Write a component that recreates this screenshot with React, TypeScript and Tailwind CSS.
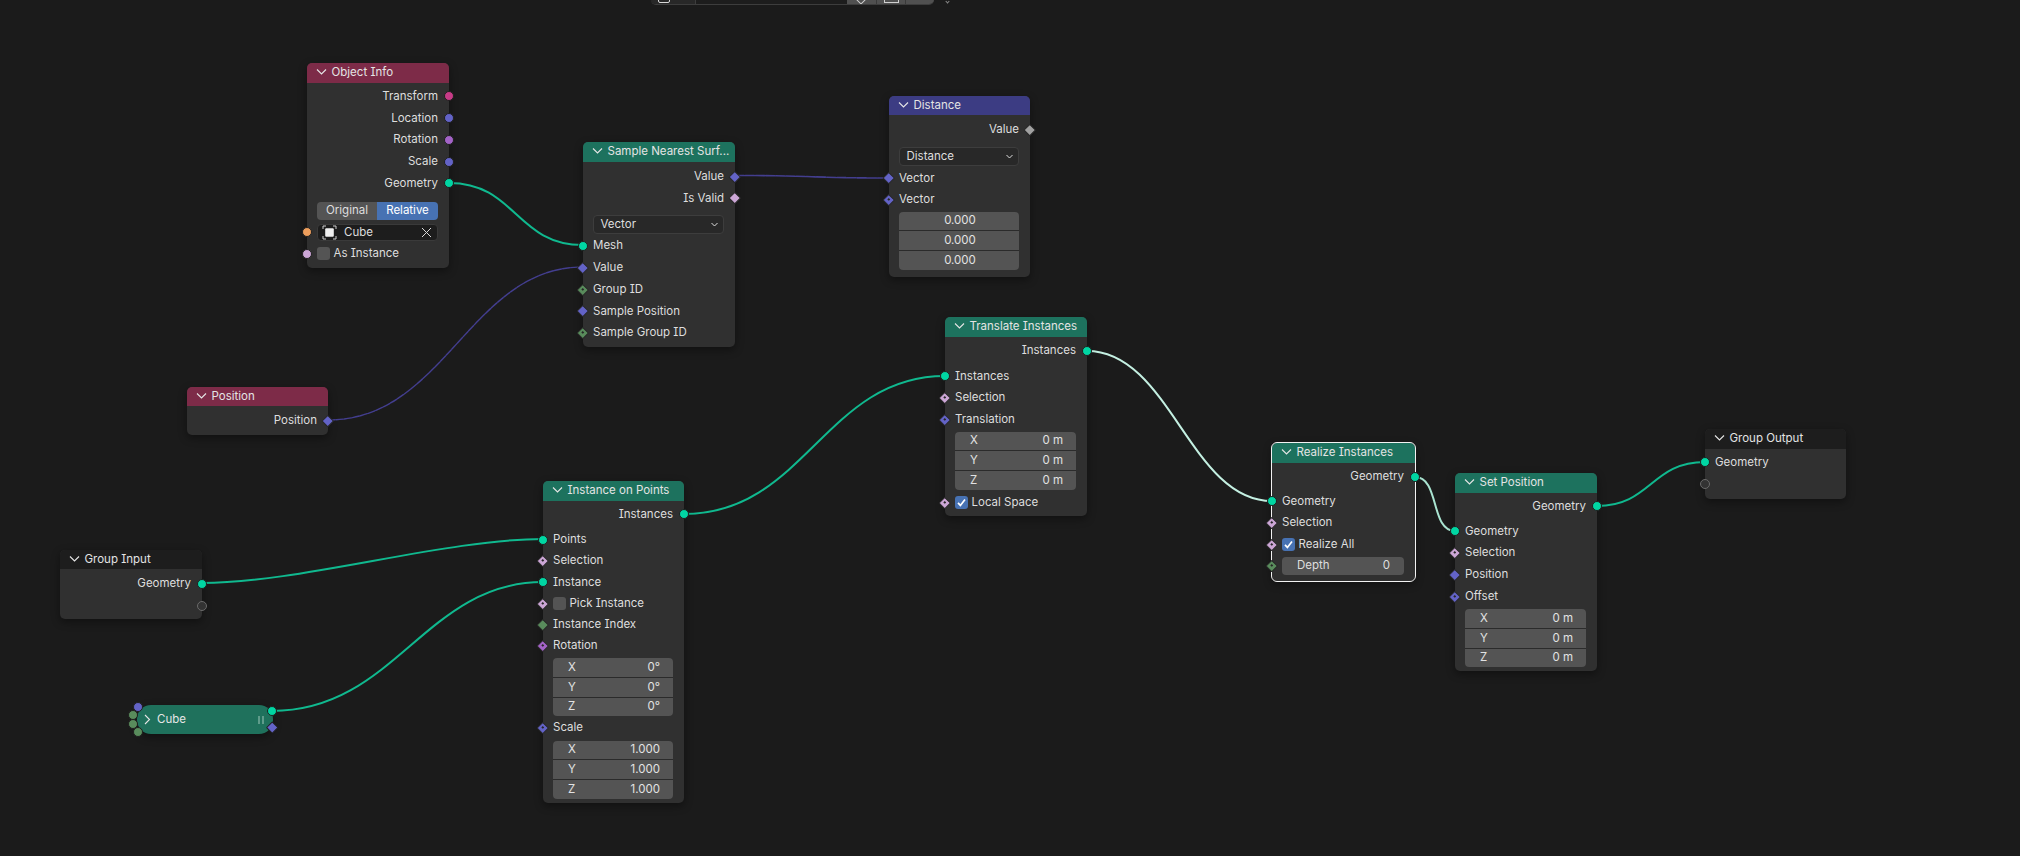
import React from "react";

const GEO = "bg-[#00d6a3]";
const VEC = "bg-[#6363c7]";
const BOOL = "bg-[#cca6d6]";
const INT = "bg-[#598c5c]";
const FLOAT = "bg-[#a1a1a1]";
const ROT = "bg-[#a363c7]";
const MAT = "bg-[#c73b87]";
const OBJ = "bg-[#ed9e5c]";
const EMPTY = "bg-[#333333] !border-[#6a6a6a]";

type SocketProps = { side: "l" | "r"; color: string; shape?: "c" | "d"; dot?: boolean };

function Socket({ side, color, shape = "c", dot }: SocketProps) {
  const pos = side === "l" ? "left-0 -translate-x-1/2" : "right-0 translate-x-1/2";
  if (shape === "c") {
    return (
      <span className={`absolute top-1/2 ${pos} -translate-y-1/2 h-[10px] w-[10px] rounded-full border-[0.5px] border-[#1f1f1f] ${color}`} />
    );
  }
  return (
    <span className={`absolute top-1/2 ${pos} -translate-y-1/2 flex h-[11px] w-[11px] items-center justify-center`}>
      <span className={`flex h-[8.5px] w-[8.5px] shrink-0 rotate-45 items-center justify-center rounded-[1px] border-[0.5px] border-[#262626] ${color}`}>
        {dot ? <span className="h-[2px] w-[2px] bg-[#262626]" /> : null}
      </span>
    </span>
  );
}

function Chevron({ open = true }: { open?: boolean }) {
  return (
    <svg width="11" height="11" viewBox="0 0 11 11" className="shrink-0 text-[#e6e6e6]">
      {open ? (
        <path d="M1 2.5 L5.5 7 L10 2.5" fill="none" stroke="currentColor" strokeWidth="1.1" />
      ) : (
        <path d="M3 1 L7.5 5.5 L3 10" fill="none" stroke="currentColor" strokeWidth="1.1" />
      )}
    </svg>
  );
}

function Node({
  title,
  place,
  head,
  body,
  selected,
  children,
}: {
  title: string;
  place: string;
  head: string;
  body: string;
  selected?: boolean;
  children: React.ReactNode;
}) {
  return (
    <div
      className={`absolute ${place} flex flex-col rounded-[5px] bg-[#303030] shadow-[0_3px_8px_rgba(0,0,0,0.4)] ${
        selected ? "outline outline-[1.5px] outline-[#f2f2f2]" : ""
      }`}
    >
      <div className={`flex h-[19.5px] items-center gap-[4.5px] rounded-t-[5px] pl-[9px] text-[#e4e4e4] ${head}`}>
        <Chevron />
        <span className="whitespace-nowrap">{title}</span>
      </div>
      <div className={`flex flex-col ${body}`}>{children}</div>
    </div>
  );
}

function Out({ label, color, shape }: { label?: string; color: string; shape?: "c" | "d" }) {
  return (
    <div className="relative flex h-[21.75px] items-center justify-end pr-[11px]">
      <span>{label}</span>
      <Socket side="r" color={color} shape={shape} />
    </div>
  );
}

function In({
  label,
  color,
  shape,
  dot,
  h = "h-[21.75px]",
  children,
}: {
  label?: string;
  color: string;
  shape?: "c" | "d";
  dot?: boolean;
  h?: string;
  children?: React.ReactNode;
}) {
  return (
    <div className={`relative flex ${h} items-center pl-[10px]`}>
      {label ? <span>{label}</span> : null}
      {children}
      <Socket side="l" color={color} shape={shape} dot={dot} />
    </div>
  );
}

function Check({ label, checked }: { label: string; checked?: boolean }) {
  return (
    <span className="flex items-center gap-[3.5px]">
      <span className={`flex h-[13px] w-[13px] items-center justify-center rounded-[3px] ${checked ? "bg-[#4772b3]" : "bg-[#545454]"}`}>
        {checked ? (
          <svg width="11" height="11" viewBox="0 0 11 11">
            <path d="M2 5.8 L4.4 8.4 L9 2.4" fill="none" stroke="#ffffff" strokeWidth="1.7" />
          </svg>
        ) : null}
      </span>
      <span>{label}</span>
    </span>
  );
}

function Triple({ rows, center, mt = "mt-0" }: { rows: [string, string][]; center?: boolean; mt?: string }) {
  return (
    <div className={`ml-[10px] mr-[11px] flex flex-col gap-px overflow-hidden rounded-[4px] bg-[#2b2b2b] ${mt}`}>
      {rows.map(([k, v], i) => (
        <div
          key={i}
          className={`flex h-[18.7px] items-center bg-[#545454] pl-[15px] pr-[13px] text-[#e2e2e2] ${center ? "justify-center" : "justify-between"}`}
        >
          {center ? null : <span>{k}</span>}
          <span>{v}</span>
        </div>
      ))}
    </div>
  );
}

function Select({ label, mt }: { label: string; mt: string }) {
  return (
    <div className={`ml-[10px] mr-[11px] flex h-[19px] items-center justify-between rounded-[4px] border border-[#3d3d3d] bg-[#282828] pl-[6.5px] pr-[4px] ${mt}`}>
      <span>{label}</span>
      <svg width="9" height="9" viewBox="0 0 9 9">
        <path d="M1.5 3 L4.5 6 L7.5 3" fill="none" stroke="#dddddd" strokeWidth="1" />
      </svg>
    </div>
  );
}

const XYZ_M: [string, string][] = [
  ["X", "0 m"],
  ["Y", "0 m"],
  ["Z", "0 m"],
];

const LINK_GEO = "#10b98f";
const LINK_SEL = "#c4f0e2";
const LINK_VEC = "#433e8f";
const ROW = "h-[21.2px]";

export default function App() {
  return (
    <div className="relative h-[856px] w-[2020px] overflow-hidden bg-[#1b1b1b] font-['Inter','Liberation_Sans',sans-serif] text-[11.5px] text-[#dedede] [font-feature-settings:'cv08']">
      {/* noodles */}
      <svg width="2020" height="856" className="absolute left-0 top-0">
        <g fill="none" strokeLinecap="round">
          <path d="M449 183 C 516 183, 516 245, 583 245" stroke={LINK_GEO} strokeWidth="2" />
          <path d="M328 420 C 445 420, 470 267, 583 267" stroke={LINK_VEC} strokeWidth="1.4" strokeDasharray="7 1.2" />
          <path d="M735 175.5 C 812 175.5, 812 178, 889 178" stroke={LINK_VEC} strokeWidth="1.6" strokeDasharray="9 1.2" />
          <path d="M202 583 C 300 583, 445 539, 543 539" stroke={LINK_GEO} strokeWidth="2" />
          <path d="M272 711 C 395 711, 425 582, 543 582" stroke={LINK_GEO} strokeWidth="2" />
          <path d="M684 514 C 805 514, 825 376, 945 376" stroke={LINK_GEO} strokeWidth="2" />
          <path d="M1087 351 C 1170 351, 1190 501, 1272 501" stroke={LINK_SEL} strokeWidth="2" />
          <path d="M1415 477 C 1440 477, 1430 531, 1455 531" stroke="#a9e4d1" strokeWidth="2" />
          <path d="M1597 506 C 1651 506, 1651 462, 1705 462" stroke={LINK_GEO} strokeWidth="2" />
        </g>
      </svg>

      {/* top bar */}
      <div className="absolute left-[651px] top-0 flex h-[5px] w-[283px] overflow-hidden rounded-b-[6px] border-b border-[#3d3d3d]">
        <div className="relative w-[44px] bg-[#282828]">
          <span className="absolute -top-[5px] left-[7px] h-[8px] w-[12px] rounded-[2px] border border-[#d8d8d8]" />
        </div>
        <div className="flex-1 border-l border-[#3d3d3d] bg-[#1d1d1d]" />
        <div className="relative w-[29px] bg-[#505050]">
          <span className="absolute -top-[5px] left-[10px] h-[8px] w-[8px] rotate-45 border border-[#cfcfcf]" />
        </div>
        <div className="relative w-[29px] border-l border-[#3a3a3a] bg-[#505050]">
          <span className="absolute -top-[5px] left-[7px] h-[8px] w-[15px] border border-[#cfcfcf]" />
        </div>
        <div className="w-[29px] border-l border-[#3a3a3a] bg-[#505050]" />
      </div>
      <span className="absolute left-[946px] top-0 h-[3px] w-[3px] rotate-45 border-b border-r border-[#8a8a8a]" />

      <Node title="Object Info" place="left-[307px] top-[63px] w-[142px]" head="bg-[#7d2b48]" body="pt-[3px] pb-[3px]">
        <Out label="Transform" color={MAT} />
        <Out label="Location" color={VEC} />
        <Out label="Rotation" color={ROT} />
        <Out label="Scale" color={VEC} />
        <Out label="Geometry" color={GEO} />
        <div className="ml-[10px] mr-[11px] mt-[7.5px] flex h-[18px] overflow-hidden rounded-[4px]">
          <div className="flex w-[60px] items-center justify-center bg-[#545454]">Original</div>
          <div className="flex flex-1 items-center justify-center bg-[#4772b3] text-white">Relative</div>
        </div>
        <div className="relative mt-[4px] h-[17px]">
          <div className="ml-[10px] mr-[11px] flex h-[17px] items-center rounded-[4px] border border-[#3a3a3a] bg-[#1d1d1d] pl-[4px] pr-[5px]">
            <svg width="15" height="15" viewBox="0 0 15 15" className="shrink-0">
              <path d="M4 1 H1 V4 M11 1 H14 V4 M1 11 V14 H4 M14 11 V14 H11" fill="none" stroke="#cfcfcf" strokeWidth="1" />
              <rect x="3.2" y="3.2" width="8.6" height="8.6" rx="1" fill="#f0f0f0" />
            </svg>
            <span className="ml-[7px] flex-1">Cube</span>
            <svg width="11" height="11" viewBox="0 0 11 11" className="shrink-0">
              <path d="M1 1 L10 10 M10 1 L1 10" fill="none" stroke="#d8d8d8" strokeWidth="1" />
            </svg>
          </div>
          <Socket side="l" color={OBJ} />
        </div>
        <div className="mt-[2px]">
          <In color={BOOL}>
            <Check label="As Instance" />
          </In>
        </div>
      </Node>

      <Node title="Sample Nearest Surf..." place="left-[583px] top-[142px] w-[152px]" head="bg-[#1d725e]" body="pt-[4px] pb-[3.5px]">
        <Out label="Value" color={VEC} shape="d" />
        <Out label="Is Valid" color={BOOL} shape="d" />
        <Select label="Vector" mt="mt-[6px]" />
        <div className="h-[1px]" />
        <In label="Mesh" color={GEO} />
        <In label="Value" color={VEC} shape="d" />
        <In label="Group ID" color={INT} shape="d" dot />
        <In label="Sample Position" color={VEC} shape="d" />
        <In label="Sample Group ID" color={INT} shape="d" dot />
      </Node>

      <Node title="Distance" place="left-[889px] top-[95.5px] w-[141px]" head="bg-[#3c3c83]" body="pt-[4px] pb-[7.5px]">
        <Out label="Value" color={FLOAT} shape="d" />
        <Select label="Distance" mt="mt-[6.5px]" />
        <div className="h-[1px]" />
        <In label="Vector" color={VEC} shape="d" />
        <In label="Vector" color={VEC} shape="d" dot />
        <Triple
          center
          mt="mt-[1px]"
          rows={[
            ["", "0.000"],
            ["", "0.000"],
            ["", "0.000"],
          ]}
        />
      </Node>

      <Node title="Position" place="left-[187px] top-[386.5px] w-[141px]" head="bg-[#7d2b48]" body="pt-[3.5px] pb-[4px]">
        <Out label="Position" color={VEC} shape="d" />
      </Node>

      <Node title="Group Input" place="left-[60px] top-[549.5px] w-[142px]" head="bg-[#1d1d1d]" body="pt-[4px] pb-[2.5px]">
        <Out label="Geometry" color={GEO} />
        <Out color={EMPTY} />
      </Node>

      <Node title="Instance on Points" place="left-[543px] top-[481px] w-[141px]" head="bg-[#1d725e]" body="pt-[3px] pb-[4.5px]">
        <Out label="Instances" color={GEO} />
        <div className="h-[4px]" />
        <In h={ROW} label="Points" color={GEO} />
        <In h={ROW} label="Selection" color={BOOL} shape="d" dot />
        <In h={ROW} label="Instance" color={GEO} />
        <In h={ROW} color={BOOL} shape="d" dot>
          <Check label="Pick Instance" />
        </In>
        <In h={ROW} label="Instance Index" color={INT} shape="d" />
        <In h={ROW} label="Rotation" color={ROT} shape="d" dot />
        <Triple
          mt="mt-[2px]"
          rows={[
            ["X", "0°"],
            ["Y", "0°"],
            ["Z", "0°"],
          ]}
        />
        <div className="h-[1px]" />
        <In h={ROW} label="Scale" color={VEC} shape="d" dot />
        <Triple
          mt="mt-[2px]"
          rows={[
            ["X", "1.000"],
            ["Y", "1.000"],
            ["Z", "1.000"],
          ]}
        />
      </Node>

      <Node title="Translate Instances" place="left-[945px] top-[317px] w-[142px]" head="bg-[#1d725e]" body="pt-[3.5px] pb-[2.5px]">
        <Out label="Instances" color={GEO} />
        <div className="h-[3.5px]" />
        <In label="Instances" color={GEO} />
        <In label="Selection" color={BOOL} shape="d" dot />
        <In label="Translation" color={VEC} shape="d" dot />
        <Triple mt="mt-[1px]" rows={XYZ_M} />
        <div className="mt-[2px]">
          <In color={BOOL} shape="d" dot>
            <Check label="Local Space" checked />
          </In>
        </div>
      </Node>

      <Node title="Realize Instances" place="left-[1272px] top-[443px] w-[143px]" head="bg-[#1d725e]" body="pt-[3.5px] pb-[5.5px]" selected>
        <Out label="Geometry" color={GEO} />
        <div className="h-[2.5px]" />
        <In label="Geometry" color={GEO} />
        <In label="Selection" color={BOOL} shape="d" dot />
        <In color={BOOL} shape="d" dot>
          <Check label="Realize All" checked />
        </In>
        <div className="relative h-[19.5px] pt-[1px]">
          <div className="ml-[10px] mr-[11px] flex h-[18.5px] items-center justify-between rounded-[4px] bg-[#545454] pl-[15px] pr-[14px]">
            <span>Depth</span>
            <span>0</span>
          </div>
          <Socket side="l" color={INT} shape="d" dot />
        </div>
      </Node>

      <Node title="Set Position" place="left-[1455px] top-[473px] w-[142px]" head="bg-[#1d725e]" body="pt-[3px] pb-[3.5px]">
        <Out label="Geometry" color={GEO} />
        <div className="h-[3px]" />
        <In label="Geometry" color={GEO} />
        <In label="Selection" color={BOOL} shape="d" dot />
        <In label="Position" color={VEC} shape="d" />
        <In label="Offset" color={VEC} shape="d" dot />
        <Triple mt="mt-[2px]" rows={XYZ_M} />
      </Node>

      <Node title="Group Output" place="left-[1705px] top-[429px] w-[141px]" head="bg-[#1d1d1d]" body="pt-[3px] pb-[3.5px]">
        <In label="Geometry" color={GEO} />
        <In color={EMPTY} />
      </Node>

      {/* collapsed group node */}
      <div className="absolute left-[137px] top-[705px] flex h-[29px] w-[136px] items-center rounded-[14px] bg-[#1f715c] pl-[5px] pr-[9px] text-[#e6e6e6] shadow-[0_3px_8px_rgba(0,0,0,0.4)]">
        <Chevron open={false} />
        <span className="ml-[4px] flex-1">Cube</span>
        <span className="flex gap-[2px]">
          <span className="h-[8px] w-[2px] bg-[#5f9c8b]" />
          <span className="h-[8px] w-[2px] bg-[#5f9c8b]" />
        </span>
        <span className="absolute -left-[4px] -top-[3px] h-[9.5px] w-[9.5px] rounded-full border-[0.5px] border-[#1f1f1f] bg-[#6363c7]" />
        <span className="absolute -left-[9px] top-[5px] h-[9.5px] w-[9.5px] rounded-full border-[0.5px] border-[#1f1f1f] bg-[#598c5c]" />
        <span className="absolute -left-[9px] top-[14px] h-[9.5px] w-[9.5px] rounded-full border-[0.5px] border-[#1f1f1f] bg-[#598c5c]" />
        <span className="absolute -left-[4px] top-[22px] h-[9.5px] w-[9.5px] rounded-full border-[0.5px] border-[#1f1f1f] bg-[#598c5c]" />
        <span className="absolute -right-[4px] top-[1px] h-[10px] w-[10px] rounded-full border-[0.5px] border-[#1f1f1f] bg-[#00d6a3]" />
        <span className="absolute -right-[3px] top-[18px] h-[8.5px] w-[8.5px] rotate-45 rounded-[1px] border-[0.5px] border-[#1f1f1f] bg-[#6363c7]" />
      </div>
    </div>
  );
}
